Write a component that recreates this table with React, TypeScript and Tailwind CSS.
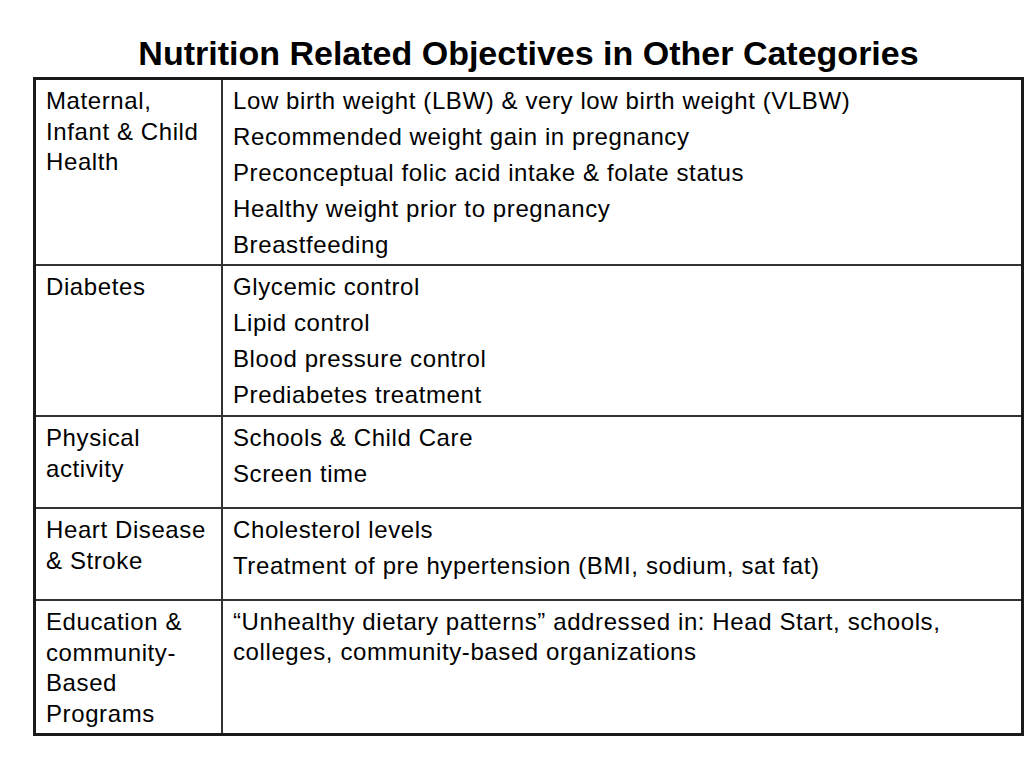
const rows: { label: string[]; items: string[]; h: string }[] = [
  {
    label: ['Maternal,', 'Infant & Child', 'Health'],
    items: [
      'Low birth weight (LBW) & very low birth weight (VLBW)',
      'Recommended weight gain in pregnancy',
      'Preconceptual folic acid intake & folate status',
      'Healthy weight prior to pregnancy',
      'Breastfeeding',
    ],
    h: 'h-[184px]',
  },
  {
    label: ['Diabetes'],
    items: ['Glycemic control', 'Lipid control', 'Blood pressure control', 'Prediabetes treatment'],
    h: 'h-[151px]',
  },
  {
    label: ['Physical', 'activity'],
    items: ['Schools & Child Care', 'Screen time'],
    h: 'h-[92px]',
  },
  {
    label: ['Heart Disease', '& Stroke'],
    items: ['Cholesterol levels', 'Treatment of pre hypertension (BMI, sodium, sat fat)'],
    h: 'h-[92px]',
  },
  {
    label: ['Education &', 'community-', 'Based', 'Programs'],
    items: ['\u201cUnhealthy dietary patterns\u201d addressed in: Head Start, schools, colleges, community-based organizations'],
    h: 'h-[134px]',
  },
];

export default function App() {
  return (
    <div className="w-[1024px] h-[768px] bg-white text-black font-['Liberation_Sans',Arial,sans-serif] overflow-hidden">
      <div className="ml-[33px] w-[991px] pt-[33px]">
        <h1 className="text-center text-[34px] leading-[40px] font-bold mb-[4px]">
          Nutrition Related Objectives in Other Categories
        </h1>
        <div className="border-[3px] border-[#1a1a1a] text-[24px] tracking-[0.6px]">
          {rows.map((r, i) => (
            <div
              key={i}
              className={`flex ${r.h} ${i > 0 ? 'border-t-2 border-[#333]' : ''}`}
            >
              <div className="w-[187px] shrink-0 border-r-2 border-[#333] pl-[10px] pr-1 pt-[6px] leading-[30.5px]">
                {r.label.map((l) => (
                  <div key={l}>{l}</div>
                ))}
              </div>
              <div className="flex-1 pl-[10px] pr-4 pt-[6px] leading-[30px] flex flex-col gap-[6px]">
                {r.items.map((t) => (
                  <p key={t}>{t}</p>
                ))}
              </div>
            </div>
          ))}
        </div>
      </div>
    </div>
  );
}
